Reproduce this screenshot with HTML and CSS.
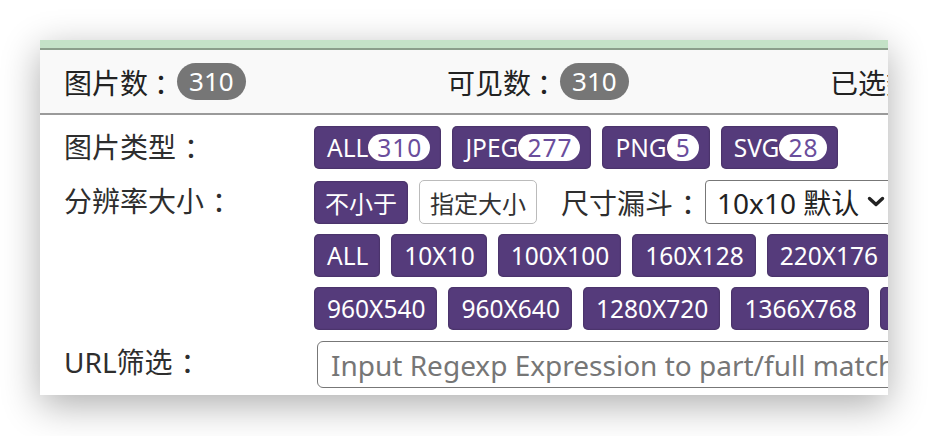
FILE: index.html
```html
<html>
    <head>
        <meta charset="utf-8">
        <link rel="stylesheet" href="styles.css">
    </head>
    <body>
    <div class="popup">
        <div class="topbar"></div>

        <div class="stats">
            <div class="stat">图片数<span class="colon">：</span><span class="count">310</span></div>
            <div class="stat">可见数<span class="colon">：</span><span class="count">310</span></div>
            <div class="stat">已选数<span class="colon">：</span><span class="count">0</span></div>
        </div>

        <div class="filters">
            <div class="filter">
                <div class="label">图片类型<span class="colon">：</span></div>
                <div class="options">
                    <span class="btn">ALL<span class="num">310</span></span>
                    <span class="btn">JPEG<span class="num">277</span></span>
                    <span class="btn">PNG<span class="num">5</span></span>
                    <span class="btn">SVG<span class="num">28</span></span>
                </div>
            </div>

            <div class="filter">
                <div class="label">分辨率大小<span class="colon">：</span></div>
                <div class="lines">
                    <div class="options">
                        <span class="btn cjk">不小于</span>
                        <span class="btn cjk plain">指定大小</span>
                        <span class="funnel">尺寸漏斗<span class="colon">：</span></span>
                        <div class="select">10x10 默认
                            <svg class="chev" width="18" height="12" viewBox="0 0 18 12"><path d="M2.5 2.5 L9 8.5 L15.5 2.5" fill="none" stroke="#222" stroke-width="3.4" stroke-linecap="round" stroke-linejoin="round"/></svg>
                        </div>
                    </div>
                    <div class="options">
                        <span class="btn">ALL</span>
                        <span class="btn">10X10</span>
                        <span class="btn">100X100</span>
                        <span class="btn">160X128</span>
                        <span class="btn">220X176</span>
                        <span class="btn">240X320</span>
                    </div>
                    <div class="options">
                        <span class="btn">960X540</span>
                        <span class="btn">960X640</span>
                        <span class="btn">1280X720</span>
                        <span class="btn">1366X768</span>
                        <span class="btn">1920X1080</span>
                    </div>
                </div>
            </div>

            <div class="filter">
                <div class="label">URL筛选<span class="colon">：</span></div>
                <input type="text" class="regexp" placeholder="Input Regexp Expression to part/full match the url">
            </div>
        </div>
    </div>
    </body>
</html>
```

FILE: styles.css
```css
body {
    margin: 0;
    background-color: white;
    font-family: "Noto Sans", "Noto Sans CJK SC", sans-serif;
    color: #2e2e2e;
}
.popup {
    margin: 40px 0 0 40px;
    width: 848px;
    height: 355px;
    overflow: hidden;
    background-color: white;
    box-shadow: 0 10px 36px rgba(0, 0, 0, 0.32);
}
.topbar {
    height: 8px;
    background-color: #c4e2c7;
    border-bottom: 2px solid #8b9e8b;
}
.stats {
    height: 63px;
    background-color: #f9f9f9;
    border-bottom: 2px solid #9a9a9a;
    padding-left: 24px;
    display: grid;
    grid-template-columns: repeat(3, 383px);
    align-items: center;
    font-size: 28px;
    color: #222;
    white-space: nowrap;
}
.stat {
    display: flex;
    align-items: center;
}
.colon {
    margin-left: 8px;
    margin-right: -8px;
}
.stat .colon {
    margin-left: 6px;
    margin-right: -5px;
}
.count {
    background-color: #767676;
    color: white;
    font-size: 26px;
    line-height: 37px;
    height: 37px;
    padding: 0 12px;
    border-radius: 19px;
}
.filters {
    padding: 11px 0 0 24px;
    display: flex;
    flex-direction: column;
    gap: 11px;
}
.filter {
    display: flex;
    align-items: flex-start;
}
.label {
    width: 250px;
    flex-shrink: 0;
    font-size: 28px;
    line-height: 43px;
    white-space: nowrap;
}
.lines {
    display: flex;
    flex-direction: column;
    gap: 10px;
}
.options {
    display: flex;
    align-items: center;
    gap: 11px;
    white-space: nowrap;
}
.btn {
    display: flex;
    align-items: center;
    height: 43px;
    padding: 0 12px 0 13px;
    background-color: #553b7b;
    color: white;
    font-size: 24.5px;
    border-radius: 5px;
    box-shadow: inset 0 0 2px rgba(0, 0, 0, 0.45);
    flex-shrink: 0;
}
.btn.cjk {
    font-size: 24px;
    padding: 0 11px;
}
.btn.plain {
    background-color: white;
    color: #333;
    border: 1px solid #bbb;
    height: 42px;
    padding: 0 10px;
    box-shadow: none;
}
.num {
    background-color: white;
    color: #6a4d9c;
    font-size: 24.5px;
    letter-spacing: 1px;
    line-height: 27px;
    height: 27px;
    padding: 0 8px 0 9px;
    border-radius: 14px;
}
.btn:has(.num) {
    padding-right: 11px;
}
.funnel {
    font-size: 28px;
    margin-left: 13px;
}
.select {
    display: flex;
    align-items: center;
    height: 42px;
    width: 200px;
    padding-left: 11px;
    border: 1px solid #777;
    border-radius: 4px;
    font-size: 28px;
    color: #222;
    flex-shrink: 0;
    margin-left: -7px;
}
.chev {
    margin-left: 8px;
}
.regexp {
    width: 640px;
    height: 47px;
    margin-left: 3px;
    padding: 0 13px;
    border: 1.5px solid #777;
    border-radius: 6px;
    font-family: "Noto Sans", "Noto Sans CJK SC", sans-serif;
    font-size: 28px;
    flex-shrink: 0;
}
.regexp::placeholder {
    color: #767676;
}
```
